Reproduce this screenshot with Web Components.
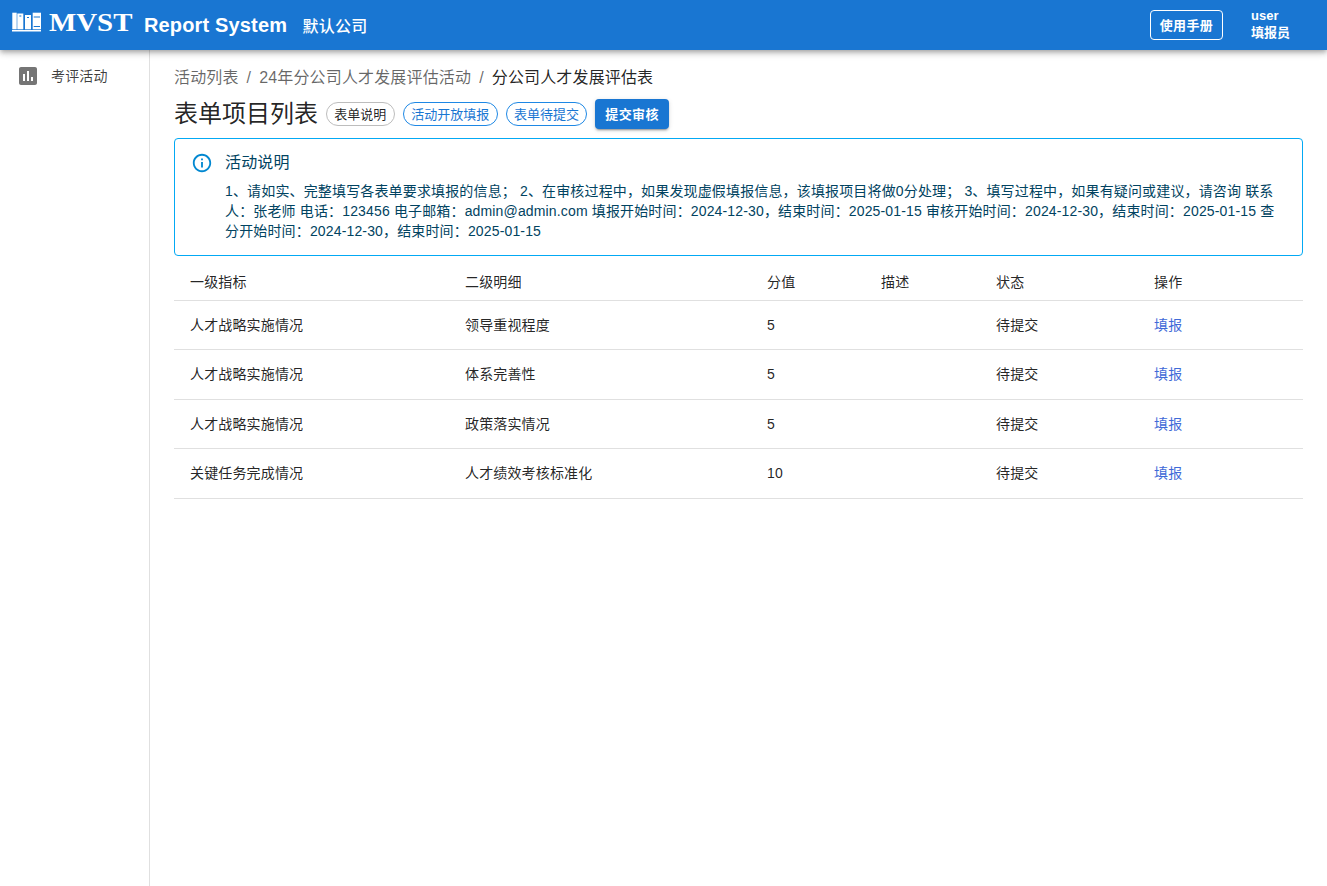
<!DOCTYPE html>
<html lang="zh-CN"><head><meta charset="utf-8"><title>Report System</title>
<style>
html,body{margin:0;height:100%;background:#fff}
body{font-family:"Liberation Sans","Noto Sans CJK SC",sans-serif;color:rgba(0,0,0,.87)}
</style></head><body>
<app-shell>
  <app-bar slot="bar"></app-bar>
  <side-nav slot="nav"></side-nav>
  <bread-crumbs>
    <a>活动列表</a><a>24年分公司人才发展评估活动</a><b>分公司人才发展评估表</b>
  </bread-crumbs>
  <page-head></page-head>
  <info-alert title-text="活动说明">1、请如实、完整填写各表单要求填报的信息； 2、在审核过程中，如果发现虚假填报信息，该填报项目将做0分处理； 3、填写过程中，如果有疑问或建议，请咨询 联系人：张老师 电话：123456 电子邮箱：admin@admin.com 填报开始时间：2024-12-30，结束时间：2025-01-15 审核开始时间：2024-12-30，结束时间：2025-01-15 查分开始时间：2024-12-30，结束时间：2025-01-15</info-alert>
  <item-table></item-table>
</app-shell>
<script>
function def(name, css, html, init){
  customElements.define(name, class extends HTMLElement{
    connectedCallback(){
      if(this.shadowRoot) return;
      const r=this.attachShadow({mode:'open'});
      r.innerHTML='<style>'+css+'</style>'+html;
      if(init) init.call(this,r);
    }
  });
}
const font='font-family:"Liberation Sans","Noto Sans CJK SC",sans-serif;';
def('app-shell',`:host{display:grid;grid-template-columns:150px 1fr;grid-template-rows:50px 1fr;height:886px;overflow:hidden;${font}}
  ::slotted(app-bar){grid-column:1/3}
  main{padding:16px 24px 0;min-width:0}`,
  `<slot name="bar"></slot><slot name="nav"></slot><main><slot></slot></main>`);
def('app-bar',`:host{display:flex;align-items:center;height:50px;background:#1976d2;color:#fff;box-shadow:0 2px 4px -1px rgba(0,0,0,.2),0 4px 5px rgba(0,0,0,.14),0 1px 10px rgba(0,0,0,.12);position:relative;z-index:2}
  .logo{display:block;margin-left:12px;position:relative;top:-3px}
  .mvst{font:700 26px/1 "Liberation Serif",serif;margin-left:8px;transform:scaleX(1.11);transform-origin:left;width:95px;position:relative;top:-2px;white-space:nowrap}
  .rs{font-weight:700;font-size:20px;letter-spacing:.15px;}
  .co{font-size:16px;font-weight:500;letter-spacing:.25px;margin-left:15.500px}
  .sp{flex:1}
  .man{border:1px solid #fff;border-radius:4px;height:28px;width:71px;display:flex;align-items:center;justify-content:center;font-size:13px;font-weight:700;letter-spacing:.37px}
  .man span{position:relative;top:-1px}
  .user{width:76px;margin-left:28px;font-size:13px;font-weight:700;line-height:17px;position:relative;top:-1px}`,
  `<svg class="logo" width="29" height="20" viewBox="0 0 29 20" aria-hidden="true">
     <g fill="#fff"><rect x="0.300" y="0.700" width="4.400" height="16.600"/><rect x="5.300" y="1.500" width="6" height="15.800"/><rect x="13" y="3" width="6" height="14.300"/><rect x="20.700" y="0.700" width="8.300" height="16.600"/><rect x="0" y="18" width="29" height="1.500"/></g>
     <g fill="#1976d2"><rect x="7.300" y="3.500" width="2" height="1"/><rect x="15" y="5" width="2" height="1"/><rect x="21.700" y="4.500" width="6.300" height="1"/><rect x="21.700" y="14" width="6.300" height="1"/></g>
   </svg>
   <span class="mvst">MVST</span><span class="rs">Report System</span><span class="co">默认公司</span><span class="sp"></span>
   <span class="man"><span>使用手册</span></span><span class="user">user<br>填报员</span>`);
def('side-nav',`:host{display:block;border-right:1px solid #e0e0e0;box-sizing:border-box;padding-top:14px}
  .it{display:flex;align-items:center;height:24px;padding-left:16px;gap:11px;font-size:14px;letter-spacing:.15px;color:rgba(0,0,0,.75)}
  .it span{position:relative;top:-1px}
  svg{display:block;flex:none}`,
  `<div class="it"><svg width="24" height="24" viewBox="0 0 24 24" fill="#757575" aria-hidden="true"><path d="M19 3H5c-1.100 0-2 .9-2 2v14c0 1.100.9 2 2 2h14c1.100 0 2-.9 2-2V5c0-1.100-.9-2-2-2zM9 17H7v-7h2v7zm4 0h-2V7h2v10zm4 0h-2v-4h2v4z"/></svg><span>考评活动</span></div>`);
def('bread-crumbs',`:host{display:block;font-size:16px;letter-spacing:.15px;line-height:24px;color:rgba(0,0,0,.6)}
  ::slotted(b){font-weight:400;color:rgba(0,0,0,.87)}`,
  `<slot></slot>`,function(r){
    const kids=[...this.children];
    kids.slice(0,-1).forEach(k=>{k.insertAdjacentHTML('afterend','<span style="margin:0 8px">/</span>')});
  });
def('state-chip',`:host{display:inline-flex;align-items:center;box-sizing:border-box;height:24px;padding:0 7.250px 2px;border:1px solid #bdbdbd;border-radius:12px;font-size:13px;color:rgba(0,0,0,.87)}
  :host([blue]){border-color:#1e88e5;color:#1976d2}
  :host([wide]){padding:0 7.750px 2px}
  :host([narrow]){padding:0 7px 2px}`,`<slot></slot>`);
def('page-head',`:host{display:flex;align-items:center;gap:8px;height:32px;margin-top:8px}
  h1{margin:0;font-size:24px;font-weight:400;line-height:32px}
  button{font:inherit;font-size:13px;font-weight:700;letter-spacing:.37px;color:#fff;background:#1976d2;border:0;border-radius:4px;height:30px;width:74px;padding:0 0 2px;box-shadow:0 3px 1px -2px rgba(0,0,0,.2),0 2px 2px rgba(0,0,0,.14),0 1px 5px rgba(0,0,0,.12)}`,
  `<h1>表单项目列表</h1><state-chip>表单说明</state-chip><state-chip blue wide>活动开放填报</state-chip><state-chip blue narrow>表单待提交</state-chip><button>提交审核</button>`);
def('info-alert',`:host{display:flex;box-sizing:border-box;border:1px solid #03a9f4;border-radius:4px;padding:13px 16px 14px 16px;margin-top:8px;height:118px}
  svg{flex:none;display:block;margin:0 12px 0 0}
  .t{font-size:16px;letter-spacing:.15px;line-height:22px;color:#014361;margin-bottom:7px}
  .b{font-size:14px;letter-spacing:.15px;line-height:20px;color:#014361}`,
  `<svg width="22" height="22" viewBox="0 0 24 24" fill="#0288d1" aria-hidden="true"><path d="M11 7h2v2h-2zm0 4h2v6h-2zm1-9C6.480 2 2 6.480 2 12s4.480 10 10 10 10-4.480 10-10S17.520 2 12 2zm0 18c-4.410 0-8-3.590-8-8s3.590-8 8-8 8 3.590 8 8-3.590 8-8 8z"/></svg>
   <div><div class="t"></div><div class="b"><slot></slot></div></div>`,function(r){r.querySelector('.t').textContent=this.getAttribute('title-text')});
const rows=[['人才战略实施情况','领导重视程度','5'],['人才战略实施情况','体系完善性','5'],['人才战略实施情况','政策落实情况','5'],['关键任务完成情况','人才绩效考核标准化','10']];
def('item-table',`:host{display:block;margin-top:7px;font-size:14px;letter-spacing:.15px}
  table{border-collapse:collapse;width:100%;table-layout:fixed}
  th,td{text-align:left;font-weight:400;padding:0 0 0 16px;border-bottom:1px solid #e0e0e0;box-sizing:border-box}
  th{height:37px}
  td{height:49.500px;padding-bottom:2px}
  td.n{padding-bottom:0}
  a{color:#3f6ad8}`,
  `<table><colgroup><col style="width:275px"><col style="width:302px"><col style="width:114px"><col style="width:115px"><col style="width:158px"><col></colgroup>
  <thead><tr><th>一级指标</th><th>二级明细</th><th>分值</th><th>描述</th><th>状态</th><th>操作</th></tr></thead>
  <tbody>${rows.map(r=>`<tr><td>${r[0]}</td><td>${r[1]}</td><td class="n">${r[2]}</td><td></td><td>待提交</td><td><a>填报</a></td></tr>`).join('')}</tbody></table>`);
</script>
</body></html>
